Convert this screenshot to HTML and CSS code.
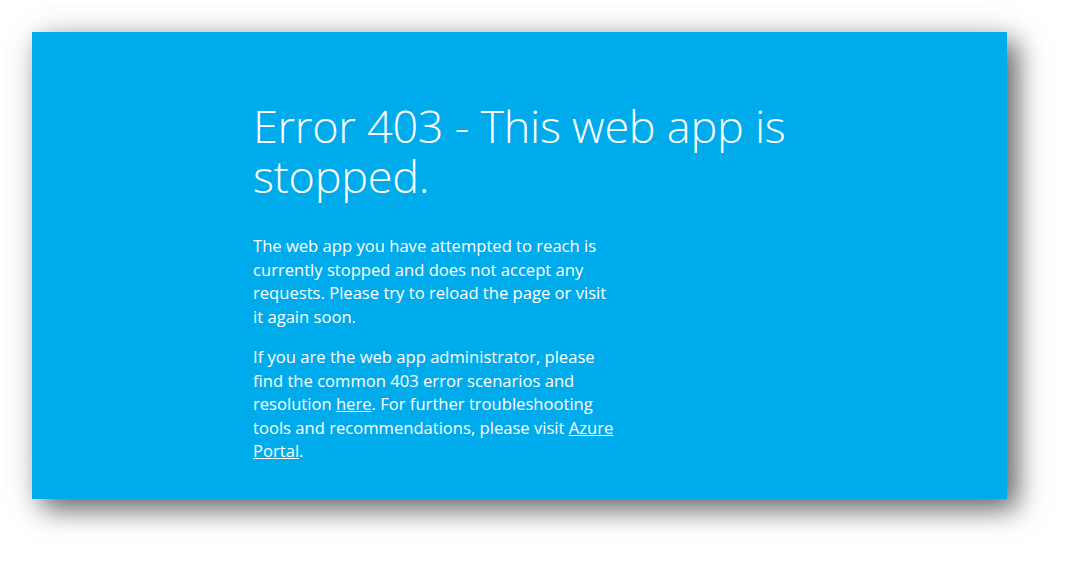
FILE: index.html
```html
<!DOCTYPE html>
<html lang="en">
<head>
<meta charset="utf-8">
<title>Error 403 - This web app is stopped.</title>
<link rel="stylesheet" href="styles.css">
</head>
<body>
<div class="stage">
  <div class="panel">
    <div class="content">
      <h1 class="title">Error 403 - This web app is stopped.</h1>
      <p class="text">The web app you have attempted to reach is currently stopped and does not accept any requests. Please try to reload the page or visit it again soon.</p>
      <p class="text">If you are the web app administrator, please find the common 403 error scenarios and resolution <a class="link" href="#">here</a>. For further troubleshooting tools and recommendations, please visit <a class="link" href="#">Azure Portal</a>.</p>
    </div>
  </div>
</div>
</body>
</html>
```

FILE: styles.css
```css
html, body {
  margin: 0;
  padding: 0;
  background: #ffffff;
}
.stage {
  box-sizing: border-box;
  min-height: 564px;
  padding: 32px 0 0 32px;
}
.panel {
  width: 975px;
  height: 467px;
  background: #00abeb;
  box-shadow: 10px 10px 26px rgba(0, 0, 0, 0.6), 0 0 34px rgba(0, 0, 0, 0.07);
  box-sizing: border-box;
  padding: 69px 0 0 221px;
  color: #ffffff;
}
.content {
  width: 560px;
}
.title {
  margin: 0 0 33px 0;
  font-family: "Open Sans", "Noto Sans", sans-serif;
  font-weight: 300;
  font-size: 45px;
  line-height: 50px;
  letter-spacing: -0.25px;
}
.text {
  width: 362px;
  margin: 0 0 17px 0;
  font-family: "Open Sans", "Noto Sans", sans-serif;
  font-size: 16.6px;
  line-height: 23.5px;
}
.link {
  color: #ffffff;
  text-decoration: underline;
}
```
